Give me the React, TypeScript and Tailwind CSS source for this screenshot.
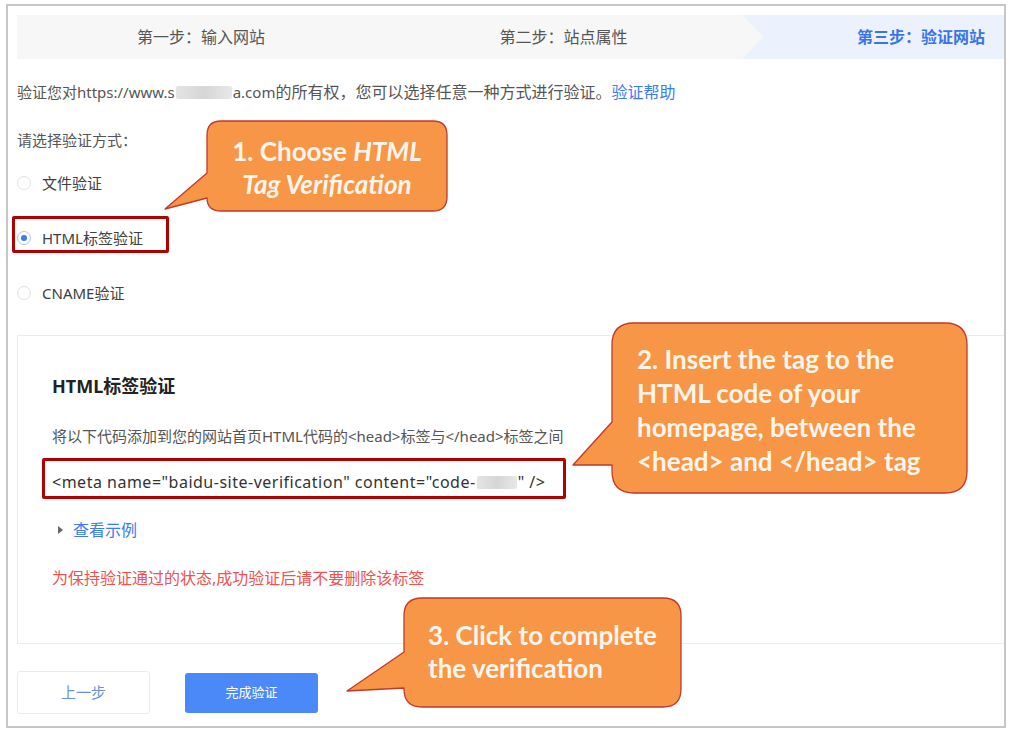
function Radio({ checked, label }: { checked?: boolean; label: string }) {
  return (
    <div className="flex h-[22px] items-center">
      {checked ? (
        <span className="flex h-[14px] w-[14px] items-center justify-center rounded-full border border-[#a9c4f5] bg-white">
          <span className="h-[6px] w-[6px] rounded-full bg-[#3b7cf0]" />
        </span>
      ) : (
        <span className="h-[14px] w-[14px] rounded-full border border-[#e2e2e2] bg-white" />
      )}
      <span className="ml-[11px] text-[15px] text-[#404040]">{label}</span>
    </div>
  );
}

function Blur({ w }: { w: number }) {
  return (
    <span
      className="mx-[1px] inline-block h-[13px] rounded-[2px] bg-gradient-to-r from-[#e4e4e4] via-[#d6d6d6] to-[#e8e8e8] align-[-1px]"
      style={{ width: w }}
    />
  );
}

export default function App() {
  return (
    <div className="relative h-[740px] w-[1016px] overflow-hidden bg-white font-[family-name:'Noto_Sans','Noto_Sans_CJK_SC',sans-serif]">
      {/* frame */}
      <div className="ml-[6px] mt-[4px] h-[724px] w-[1000px] border-2 border-[#c6c6c6] pl-[9px] pt-[9px]">
        {/* steps */}
        <div className="flex h-[44px] bg-[#ebf2fd] text-[16px]">
          <div className="flex w-[368px] items-center justify-center bg-[#f7f7f7] text-[#555]">
            第一步：输入网站
          </div>
          <div className="flex w-[378px] items-center justify-center bg-[#f7f7f7] pr-[21px] text-[#555] [clip-path:polygon(0_0,357px_0,100%_50%,357px_100%,0_100%)]">
            第二步：站点属性
          </div>
          <div className="flex flex-1 items-center justify-end pr-[19px] font-bold text-[#3a74ea]">
            第三步：验证网站
          </div>
        </div>

        <p className="mt-[22px] h-[22px] text-[15px] leading-[22px] text-[#555]">
          验证您对https://www.s<Blur w={56} />a.com
          <span className="text-[16px]">的所有权，您可以选择任意一种方式进行验证。</span>
          <span className="text-[16px] text-[#3b7cf0]">验证帮助</span>
        </p>

        <p className="mt-[26px] h-[22px] text-[15px] leading-[22px] text-[#555]">请选择验证方式：</p>

        <div className="mt-[21px] flex flex-col gap-[33px]">
          <Radio label="文件验证" />
          <Radio checked label="HTML标签验证" />
          <Radio label="CNAME验证" />
        </div>

        {/* card */}
        <div className="mt-[31px] h-[309px] border border-r-0 border-[#ebebeb] pl-[34px] pt-[39px]">
          <h3 className="h-[22px] text-[18px] font-bold leading-[22px] text-[#222]">HTML标签验证</h3>
          <p className="mt-[28px] h-[22px] text-[15px] leading-[22px] text-[#555]">
            将以下代码添加到您的网站首页HTML代码的&lt;head&gt;标签与&lt;/head&gt;标签之间
          </p>
          <p className="mt-[24px] h-[22px] text-[16px] leading-[22px] tracking-[0.5px] text-[#333]">
            &lt;meta name="baidu-site-verification" content="code-<Blur w={40} />" /&gt;
          </p>
          <div className="mt-[26px] flex h-[22px] items-center text-[15px] leading-[22px]">
            <span className="ml-[6px] h-0 w-0 border-y-[4px] border-l-[5px] border-y-transparent border-l-[#666]" />
            <span className="ml-[10px] text-[16px] text-[#3b7cf0]">查看示例</span>
          </div>
          <p className="mt-[26px] h-[22px] text-[16px] leading-[22px] text-[#f0524f]">
            为保持验证通过的状态,成功验证后请不要删除该标签
          </p>
        </div>

        {/* buttons */}
        <div className="mt-[27px] flex items-start gap-[35px]">
          <button className="h-[43px] w-[133px] rounded-[3px] border border-[#ebebeb] bg-white text-[15px] text-[#6b8fdc]">
            上一步
          </button>
          <button className="mt-[2px] h-[40px] w-[133px] rounded-[3px] bg-[#4a89f7] text-[13px] text-white">
            完成验证
          </button>
        </div>
      </div>

      {/* annotation: red boxes */}
      <div className="absolute left-[12px] top-[216px] h-[37px] w-[157px] rounded-[2px] border-[3px] border-[#b00000]" />
      <div className="absolute left-[42px] top-[458px] h-[41px] w-[524px] rounded-[2px] border-[3px] border-[#b00000]" />

      {/* annotation: callouts */}
      <svg className="pointer-events-none absolute left-0 top-0" width="1016" height="740" viewBox="0 0 1016 740">
        <g fill="#f79646" stroke="#c0392b" strokeWidth="1.3" strokeLinejoin="round">
          <path d="M221,121 H433 Q447,121 447,135 V197 Q447,211 433,211 H221 Q207,211 207,198 L165,209 L207,173 V135 Q207,121 221,121 Z" />
          <path d="M634,323 H945 Q967,323 967,345 V471 Q967,493 945,493 H634 Q612,493 612,471 V465 L573,465 L612,422 V345 Q612,323 634,323 Z" />
          <path d="M422,598 H663 Q681,598 681,616 V689 Q681,707 663,707 H422 Q404,707 404,689 V688 L347,691 L404,652 V616 Q404,598 422,598 Z" />
        </g>
      </svg>

      <div className="absolute left-[207px] top-[135px] w-[240px] text-center font-[family-name:Lato,sans-serif] text-[26px] font-bold leading-[33px] text-[#fdf5ec]">
        1. Choose <i>HTML</i>
        <br />
        <i>Tag Verification</i>
      </div>
      <div className="absolute left-[637px] top-[342px] font-[family-name:Lato,sans-serif] text-[26px] font-bold leading-[34px] text-[#fdf5ec]">
        2. Insert the tag to the
        <br />
        HTML code of your
        <br />
        homepage, between the
        <br />
        &lt;head&gt; and &lt;/head&gt; tag
      </div>
      <div className="absolute left-[428px] top-[619px] font-[family-name:Lato,sans-serif] text-[26px] font-bold leading-[33px] text-[#fdf5ec]">
        3. Click to complete
        <br />
        the verification
      </div>
    </div>
  );
}
